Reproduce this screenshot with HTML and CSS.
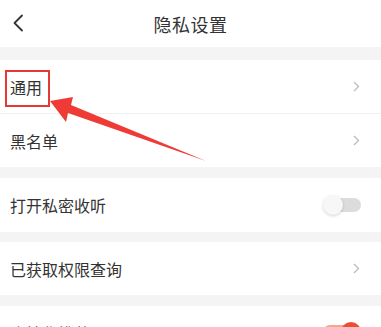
FILE: index.html
```html
<!DOCTYPE html>
<html lang="zh">
<head>
<meta charset="utf-8">
<link rel="stylesheet" href="styles.css">
</head>
<body>
<div class="page">
  <header class="header">
    <svg class="back" width="12" height="18" viewBox="0 0 12 18"><path d="M10 1.5 L2.5 9 L10 16.5" fill="none" stroke="#333" stroke-width="1.8" stroke-linecap="round" stroke-linejoin="round"/></svg>
    <h1 class="title">隐私设置</h1>
  </header>

  <section class="group g1">
    <div class="row divided"><span class="label">通用</span><span class="chev"><svg width="7" height="11" viewBox="0 0 7 11"><path d="M1 1 L5.5 5.5 L1 10" fill="none" stroke="#bbb" stroke-width="1.3"/></svg></span></div>
    <div class="row"><span class="label">黑名单</span><span class="chev"><svg width="7" height="11" viewBox="0 0 7 11"><path d="M1 1 L5.5 5.5 L1 10" fill="none" stroke="#bbb" stroke-width="1.3"/></svg></span></div>
  </section>

  <section class="group g2">
    <div class="row tall"><span class="label">打开私密收听</span><span class="switch off"><span class="knob"></span></span></div>
  </section>

  <section class="group g3">
    <div class="row"><span class="label">已获取权限查询</span><span class="chev"><svg width="7" height="11" viewBox="0 0 7 11"><path d="M1 1 L5.5 5.5 L1 10" fill="none" stroke="#bbb" stroke-width="1.3"/></svg></span></div>
  </section>

  <section class="group g4">
    <div class="row"><span class="label">个性化推荐</span><span class="switch on"><span class="knob"></span></span></div>
  </section>

  <div class="highlight"></div>
  <svg class="arrow" width="381" height="327" viewBox="0 0 381 327">
    <polygon points="50,101 73,97 71,105 206,161 68,113 66,122" fill="#ef3b36"/>
  </svg>
</div>
</body>
</html>
```

FILE: styles.css
```css
* { box-sizing: border-box; margin: 0; padding: 0; }
html, body { width: 381px; height: 327px; overflow: hidden; }
body {
  background: #f4f4f5;
  font-family: "Noto Sans CJK SC", "Noto Sans", sans-serif;
  color: #333;
}
.page { position: relative; width: 381px; height: 327px; }
.header {
  height: 47px;
  background: #fff;
  display: flex;
  align-items: center;
  justify-content: center;
  position: relative;
}
.back { position: absolute; left: 12px; top: 14px; }
.title { font-size: 18px; font-weight: 400; color: #333; letter-spacing: 0.5px; }
.group { background: #fff; }
.g1 { margin-top: 13px; }
.g2 { margin-top: 11px; }
.g3 { margin-top: 10px; }
.g4 { margin-top: 11px; }
.row {
  height: 53px;
  display: flex;
  align-items: center;
  justify-content: space-between;
  padding: 0 20px 0 10px;
}
.row.tall { height: 54px; }
.row.divided { border-bottom: 1px solid #f0f0f0; height: 54px; }
.label { font-size: 16px; color: #333; }
.chev { display: flex; align-items: center; margin-right: 1px; }
.switch {
  position: relative;
  width: 38px;
  height: 20px;
  display: block;
}
.switch::before {
  content: "";
  position: absolute;
  right: 0;
  top: 3px;
  width: 30px;
  height: 14px;
  border-radius: 7px;
  background: #dcdcdc;
}
.switch .knob {
  position: absolute;
  top: 0;
  width: 20px;
  height: 20px;
  border-radius: 50%;
  background: #f7f7f7;
  box-shadow: 0 1px 3px rgba(0,0,0,0.18);
}
.switch.off .knob { left: 0; }
.switch.on { margin-top: -2px; }
.switch.on::before { background: #f6a58e; left: 0; right: auto; }
.switch.on .knob { right: 0; background: #ec4f2f; box-shadow: none; }
.highlight {
  position: absolute;
  left: 5px;
  top: 70px;
  width: 45px;
  height: 37px;
  border: 2px solid #e53935;
}
.arrow { position: absolute; left: 0; top: 0; pointer-events: none; }
```
